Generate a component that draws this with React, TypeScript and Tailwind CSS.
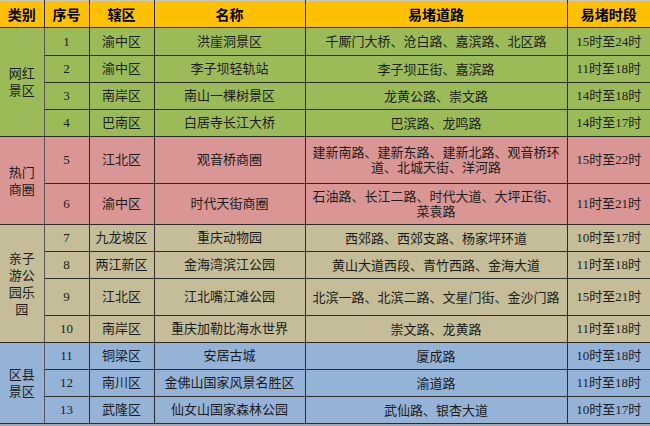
const rows = [
  { no: "1", area: "渝中区", name: "洪崖洞景区", road: ["千厮门大桥、沧白路、嘉滨路、北区路"], time: "15时至24时", h: "h-[28px]" },
  { no: "2", area: "渝中区", name: "李子坝轻轨站", road: ["李子坝正街、嘉滨路"], time: "11时至18时", h: "h-[27px]" },
  { no: "3", area: "南岸区", name: "南山一棵树景区", road: ["龙黄公路、崇文路"], time: "14时至18时", h: "h-[27px]" },
  { no: "4", area: "巴南区", name: "白居寺长江大桥", road: ["巴滨路、龙鸣路"], time: "14时至17时", h: "h-[27px]" },
  { no: "5", area: "江北区", name: "观音桥商圈", road: ["建新南路、建新东路、建新北路、观音桥环", "道、北城天街、洋河路"], time: "15时至22时", h: "h-[47px]" },
  { no: "6", area: "渝中区", name: "时代天街商圈", road: ["石油路、长江二路、时代大道、大坪正街、", "菜袁路"], time: "11时至21时", h: "h-[41px]" },
  { no: "7", area: "九龙坡区", name: "重庆动物园", road: ["西郊路、西郊支路、杨家坪环道"], time: "10时至17时", h: "h-[27px]" },
  { no: "8", area: "两江新区", name: "金海湾滨江公园", road: ["黄山大道西段、青竹西路、金海大道"], time: "11时至18时", h: "h-[27px]" },
  { no: "9", area: "江北区", name: "江北嘴江滩公园", road: ["北滨一路、北滨二路、文星门街、金沙门路"], time: "15时至21时", h: "h-[37px]" },
  { no: "10", area: "南岸区", name: "重庆加勒比海水世界", road: ["崇文路、龙黄路"], time: "11时至18时", h: "h-[27px]" },
  { no: "11", area: "铜梁区", name: "安居古城", road: ["厦成路"], time: "10时至18时", h: "h-[27px]" },
  { no: "12", area: "南川区", name: "金佛山国家风景名胜区", road: ["渝道路"], time: "11时至18时", h: "h-[27px]" },
  { no: "13", area: "武隆区", name: "仙女山国家森林公园", road: ["武仙路、银杏大道"], time: "10时至17时", h: "h-[27px]" },
];

const groups = [
  { label: "网红景区", start: 0, span: 4, bg: "bg-[#9bbb59]" },
  { label: "热门商圈", start: 4, span: 2, bg: "bg-[#d99694]" },
  { label: "亲子游公园乐园", start: 6, span: 4, bg: "bg-[#c4bd97]" },
  { label: "区县景区", start: 10, span: 3, bg: "bg-[#95b3d7]" },
];

const cell = "border border-[#2b2b2b] text-center align-middle p-0";

export default function App() {
  return (
    <div className="w-[650px] h-[426px] bg-[#a6a6a6] overflow-hidden">
      <table
        className="table-fixed border-collapse w-[650px] text-[13px] text-[#1c1c1c]"
        style={{ fontFamily: '"Liberation Serif", "Noto Sans CJK SC", serif' }}
      >
        <colgroup>
          <col className="w-[44px]" />
          <col className="w-[45px]" />
          <col className="w-[65px]" />
          <col className="w-[151px]" />
          <col className="w-[262px]" />
          <col className="w-[83px]" />
        </colgroup>
        <thead>
          <tr className="h-[27px] bg-[#ffc000] font-bold text-[14px] text-black" style={{ fontFamily: '"Noto Sans CJK SC", sans-serif' }}>
            {["类别", "序号", "辖区", "名称", "易堵道路", "易堵时段"].map((t, i) => (
              <th
                key={t}
                className={`${cell} border-t-[#c8c8c8] font-bold ${i === 0 ? "border-l-0" : ""} ${i === 5 ? "border-r-0" : ""}`}
              >
                {t}
              </th>
            ))}
          </tr>
        </thead>
        <tbody>
          {rows.map((r, i) => {
            const g = groups.find((x) => i >= x.start && i < x.start + x.span)!;
            return (
              <tr key={r.no} className={`${r.h} ${g.bg}`}>
                {g.start === i && (
                  <td rowSpan={g.span} className={`${cell} border-l-0 border-r-[#555] px-[8px] leading-[17px] text-[13px]`}>
                    {g.label}
                  </td>
                )}
                <td className={cell}>{r.no}</td>
                <td className={cell}>{r.area}</td>
                <td className={cell}>{r.name}</td>
                <td className={`${cell} px-[2px] leading-[15px]`}>
                  {r.road.map((l, k) => (
                    <div key={k}>{l}</div>
                  ))}
                </td>
                <td className={`${cell} border-r-0`}>{r.time}</td>
              </tr>
            );
          })}
        </tbody>
      </table>
    </div>
  );
}
